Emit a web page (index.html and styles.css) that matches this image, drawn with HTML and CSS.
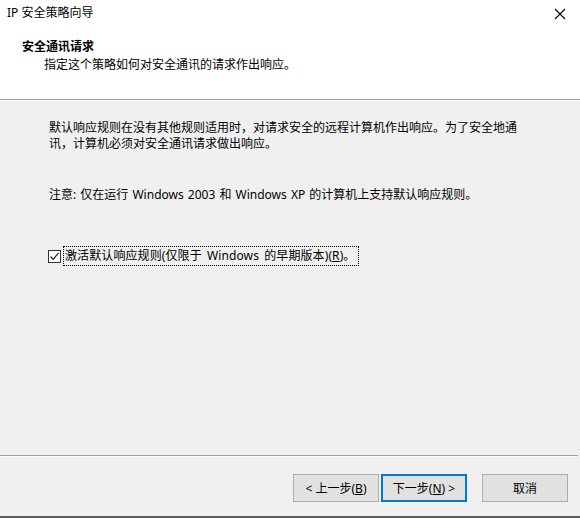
FILE: index.html
```html
<!DOCTYPE html>
<html>
<head>
<meta charset="utf-8">
<link rel="stylesheet" href="styles.css">
</head>
<body>
<div class="window">
  <div class="titlebar">
    <span class="title">IP 安全策略向导</span>
    <svg class="close" width="12" height="12" viewBox="0 0 12 12"><path d="M1 1 L11 11 M11 1 L1 11" stroke="#000" stroke-width="1.1" fill="none"/></svg>
  </div>
  <div class="header">
    <div class="h-title">安全通讯请求</div>
    <div class="h-sub">指定这个策略如何对安全通讯的请求作出响应。</div>
  </div>
  <div class="content">
    <p class="para">默认响应规则在没有其他规则适用时，对请求安全的远程计算机作出响应。为了安全地通讯，计算机必须对安全通讯请求做出响应。</p>
    <p class="note">注意: 仅在运行 Windows 2003 和 Windows XP 的计算机上支持默认响应规则。</p>
    <div class="check-row">
      <span class="checkbox"><svg width="11" height="11" viewBox="0 0 11 11"><path d="M1.5 5.5 L4.2 8.3 L9.6 1.8" stroke="#222" stroke-width="1.2" fill="none"/></svg></span>
      <span class="check-label">激活默认响应规则(仅限于 Windows 的早期版本)(<u>R</u>)。</span>
    </div>
  </div>
  <div class="footer">
    <button class="btn">&lt; 上一步(<u>B</u>)</button>
    <button class="btn default">下一步(<u>N</u>) &gt;</button>
    <button class="btn cancel">取消</button>
  </div>
</div>
</body>
</html>
```
FILE: styles.css
```css
html, body {
  margin: 0;
  padding: 0;
}
body {
  font-family: "Noto Sans", "Noto Sans CJK SC", sans-serif;
  font-size: 12px;
  color: #000;
}
.window {
  width: 580px;
  height: 518px;
  box-sizing: border-box;
  background: #f0f0f0;
  display: flex;
  flex-direction: column;
  border-bottom: 2px solid #5a5a5a;
}
.titlebar {
  height: 30px;
  background: #fff;
  display: flex;
  align-items: center;
  justify-content: space-between;
  padding: 0 10px 4px 7px;
  box-sizing: border-box;
}
.title {
  line-height: 16px;
}
.close {
  margin-right: 4px;
  margin-top: 2px;
}
.header {
  height: 70px;
  background: #fff;
  box-sizing: border-box;
  padding: 9px 0 0 22px;
  border-bottom: 1px solid #a0a0a0;
}
.h-title {
  font-weight: bold;
  line-height: 16px;
}
.h-sub {
  padding-left: 22px;
  line-height: 17px;
  margin-top: 1px;
}
.content {
  flex: 1;
  padding: 19px 48px 0 49px;
  border-top: 1px solid #fcfcfc;
}
.para {
  margin: 0;
  line-height: 16px;
  width: 472px;
}
.note {
  margin: 35px 0 0;
  line-height: 16px;
  word-spacing: 1px;
}
.check-row {
  display: flex;
  align-items: center;
  margin-top: 43px;
  margin-left: -1px;
}
.checkbox {
  width: 11px;
  height: 11px;
  border: 1px solid #333;
  background: #fff;
  display: inline-flex;
}
.check-label {
  margin-left: 2px;
  line-height: 16px;
  padding: 1px 3px 1px 1px;
  border: 1px dotted #000;
  word-spacing: 2px;
  letter-spacing: 0.1px;
}
.footer {
  height: 61px;
  box-sizing: border-box;
  border-top: 1px solid #a0a0a0;
  box-shadow: inset 0 1px 0 #fff;
  display: flex;
  align-items: flex-start;
  padding: 18px 0 0 293px;
  margin-right: 2px;
}
.btn {
  width: 86px;
  height: 28px;
  box-sizing: border-box;
  font-family: "Noto Sans", "Noto Sans CJK SC", sans-serif;
  font-size: 12px;
  background: #e1e1e1;
  border: 1px solid #adadad;
  padding: 0;
  margin: 0;
  color: #000;
}
.btn.default {
  margin-left: 2px;
  border: 2px solid #0078d7;
}
.btn.cancel {
  margin-left: 15px;
}
```
